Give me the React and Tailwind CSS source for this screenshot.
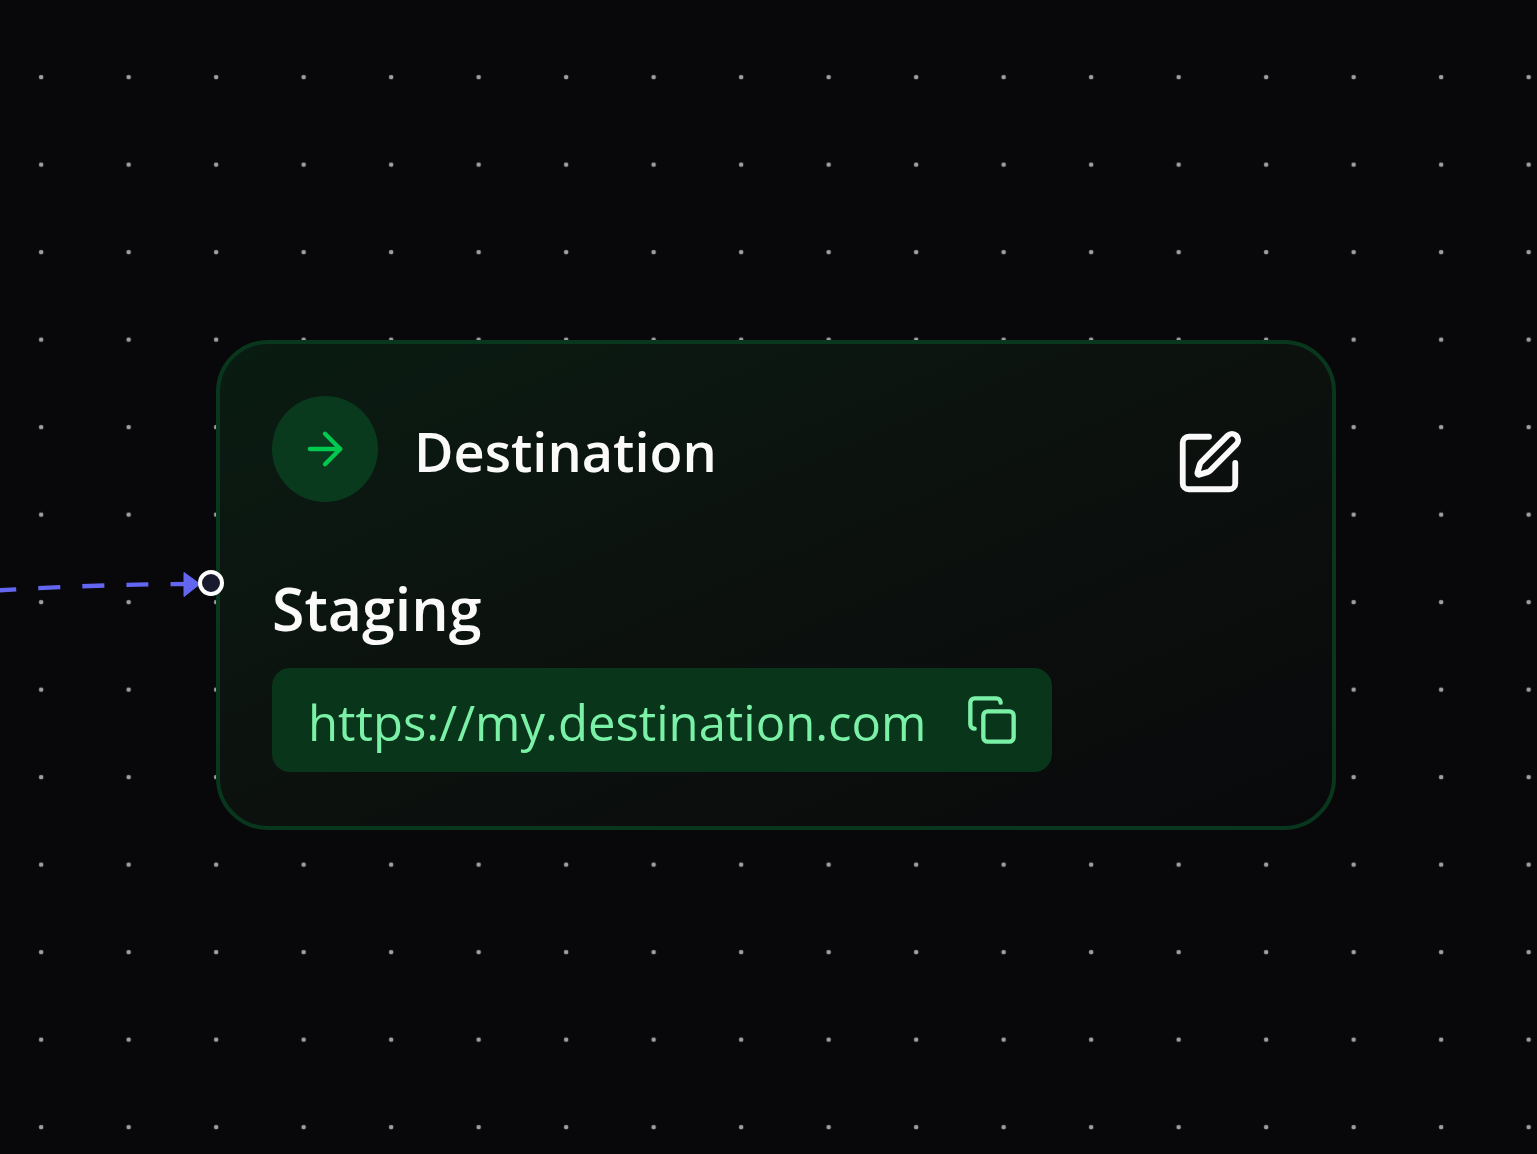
import React, { useState } from 'react';
import { ArrowRight, Copy, SquarePen } from "lucide-react";

function DotGrid() {
    return (
        <svg className="absolute inset-0 w-full h-full" aria-hidden="true">
            <pattern id="dots" x="-2.6" y="33.4" width="87.5" height="87.5" patternUnits="userSpaceOnUse">
                <circle cx="43.75" cy="43.75" r="2.3" fill="#a0a0a0" />
            </pattern>
            <rect width="100%" height="100%" fill="url(#dots)" />
        </svg>
    );
}

function Edge() {
    return (
        <svg className="absolute left-0 top-[560px] w-[200px] h-12" viewBox="0 0 200 48" fill="none" aria-hidden="true">
            <path d="M-5 30.6 C60 26.5 130 24 192 24" stroke="#6366f1" strokeWidth="4.4" strokeDasharray="22 22" strokeDashoffset="0.6" />
            <path d="M184 12.5 L200 24 L184 36.5 Z" fill="#6366f1" stroke="#6366f1" strokeWidth="1" strokeLinejoin="round" />
        </svg>
    );
}

function DestinationNode({ name, url }) {
    const [copied, setCopied] = useState(false);

    const copyUrl = () => {
        navigator.clipboard?.writeText(url);
        setCopied(true);
    };

    return (
        <article className="absolute left-[216px] top-[340px] w-[1120px] rounded-[52px] border-4 border-[#08371d] bg-[#09090b] bg-linear-to-br from-[#091c12] via-[#0c110e] to-[#09090b] px-[52px] pt-[52px] pb-[54px] text-[#fafafa]">
            <header className="flex items-start justify-between">
                <div className="flex items-center gap-9">
                    <span className="flex items-center justify-center size-[106px] rounded-full bg-[#093a1e]">
                        <ArrowRight className="size-[52px] text-[#00c950]" />
                    </span>
                    <h2 className="pt-1 text-[54px] leading-[80px] font-semibold">Destination</h2>
                </div>
                <button type="button" aria-label="Edit destination" className="px-9 py-8 cursor-pointer">
                    <SquarePen className="size-[70px]" />
                </button>
            </header>

            <h3 className="mt-[38px] mb-5 text-[59px] leading-[80px] font-semibold">{name}</h3>
            <div className="flex items-center gap-10 w-fit h-[104px] pl-9 pr-[34px] rounded-[18px] bg-[#09351b] text-[#7bf1a8]">
                <span className="pt-1 text-[49px] leading-[80px]">{url}</span>
                <button type="button" aria-label={copied ? "Copied" : "Copy URL"} onClick={copyUrl} className="cursor-pointer">
                    <Copy className="size-[52px]" />
                </button>
            </div>

            {/* Target handle */}
            <span className="absolute -left-[22px] top-[226px] size-[26px] rounded-full border-4 border-white bg-[#1a1a2e]"></span>
        </article>
    );
}

export default function App() {
    return (
        <main className="relative min-h-screen overflow-hidden bg-[#08080a] font-['Open_Sans',sans-serif]">
            <DotGrid />
            <Edge />
            <DestinationNode name="Staging" url="https://my.destination.com" />
        </main>
    );
}
